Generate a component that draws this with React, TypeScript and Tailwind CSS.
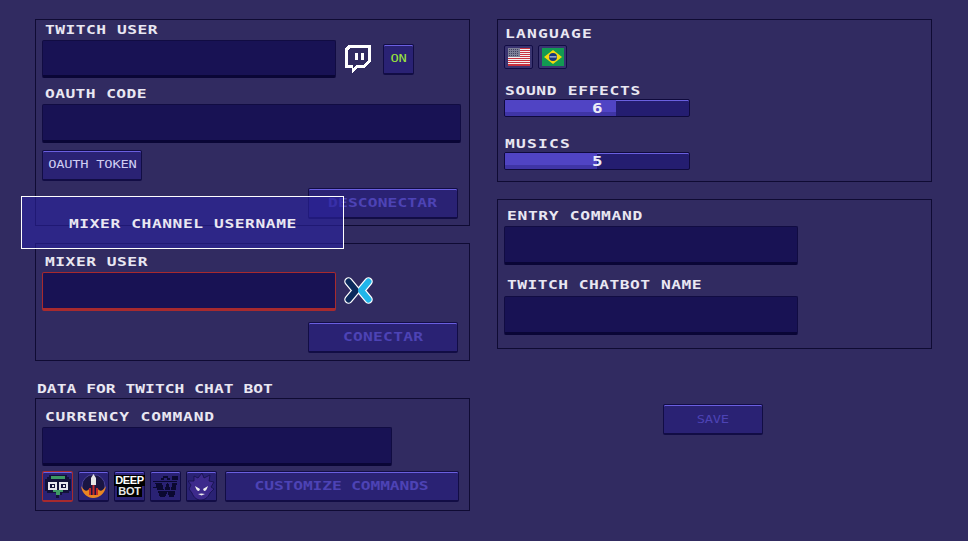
import React from "react";

const font = { fontFamily: '"DejaVu Sans Mono", monospace' };
const STRETCH = 1.25;

function Label({ children, w, className = "" }: { children: string; w: number; className?: string }) {
  const n = children.length;
  const spacing = (w / STRETCH - n * 7.83) / n;
  return (
    <div
      className={"text-[13px] leading-[14px] font-bold text-[#e9e7f2] whitespace-nowrap " + className}
      style={{ ...font, letterSpacing: spacing, width: w }}
    >
      <span className="inline-block origin-left" style={{ transform: `scaleX(${STRETCH})` }}>{children}</span>
    </div>
  );
}

function Txt({ children, spacing = 0 }: { children: string; spacing?: number }) {
  return (
    <span className="inline-block" style={{ transform: `scaleX(${STRETCH})`, letterSpacing: spacing }}>
      {children}
    </span>
  );
}

function Input({ className = "" }: { className?: string }) {
  return (
    <div className={"rounded-[2px] border border-[#110c42] border-b-[3px] border-b-[#0a0636] bg-[#181254] shrink-0 " + className} />
  );
}

function Btn({ children, className = "" }: { children?: React.ReactNode; className?: string }) {
  return (
    <div
      className={
        "flex items-center justify-center rounded-[2px] border border-[#120d45] border-b-2 bg-[#2a2274] shadow-[inset_0_1px_0_#6a5fe0] shrink-0 whitespace-nowrap " +
        className
      }
      style={font}
    >
      {children}
    </div>
  );
}

function Panel({ children, className = "" }: { children: React.ReactNode; className?: string }) {
  return <div className={"border border-[#0f0b33] w-[435px] pl-[6px] flex flex-col " + className}>{children}</div>;
}

function Slider({ value, fill }: { value: string; fill: number }) {
  return (
    <div className="relative w-[186px] h-[18px] rounded-[2px] border border-[#0f0a3c] bg-[#241d70] shadow-[inset_0_1px_0_#6a60e0] overflow-hidden" style={font}>
      <div className="flex flex-col h-full" style={{ width: fill }}>
        <div className="flex-1 bg-[#5044c4]" />
        <div className="h-[4px] bg-[#3f35a6]" />
      </div>
      <div className="absolute inset-0 flex items-center justify-center text-[14px] font-bold text-[#ecebf7]">
        <Txt>{value}</Txt>
      </div>
    </div>
  );
}

function Twitch() {
  return (
    <svg width="28" height="30" viewBox="0 0 28 30" shapeRendering="crispEdges" className="shrink-0">
      <path d="M4 1H27V18L20 24H13L8 29V24H1V5Z" fill="#fff" />
      <path d="M6 4H24V17L19 21H12L9 24V21H4V7Z" fill="#312b61" />
      <rect x="11" y="9" width="3" height="7" fill="#fff" />
      <rect x="17" y="9" width="3" height="7" fill="#fff" />
    </svg>
  );
}

function Mixer() {
  return (
    <svg width="29" height="27" viewBox="0 0 29 27" className="shrink-0">
      <path d="M4.5 4.5L12 13.5L4.5 22.5" fill="none" stroke="#fff" strokeWidth="8.5" strokeLinecap="round" strokeLinejoin="round" />
      <path d="M24.5 4.5L17 13.5L24.5 22.5" fill="none" stroke="#fff" strokeWidth="8.5" strokeLinecap="round" strokeLinejoin="round" />
      <path d="M4.5 4.5L12 13.5L4.5 22.5" fill="none" stroke="#0b2a5c" strokeWidth="6" strokeLinecap="round" strokeLinejoin="round" />
      <path d="M24.5 4.5L17 13.5L24.5 22.5" fill="none" stroke="#20b5ea" strokeWidth="6" strokeLinecap="round" strokeLinejoin="round" />
    </svg>
  );
}

function UsFlag() {
  const stripes = [0, 1, 2, 3, 4, 5, 6, 7, 8];
  return (
    <svg width="22" height="18" viewBox="0 0 22 18" shapeRendering="crispEdges">
      <rect width="22" height="18" fill="#f3f0f0" />
      {stripes.map((i) => (
        <rect key={i} y={i * 2} width="22" height="1" fill="#c8323f" />
      ))}
      <rect y="17" width="22" height="1" fill="#c8323f" />
      <rect width="12" height="9" fill="#7d7f96" />
      {[1, 3, 5, 7].map((y) =>
        [1, 3, 5, 7, 9].map((x) => <rect key={x + "-" + y} x={x} y={y} width="1" height="1" fill="#3f4260" />)
      )}
    </svg>
  );
}

function BrFlag() {
  return (
    <svg width="22" height="18" viewBox="0 0 22 18">
      <rect width="22" height="18" fill="#129a52" />
      <path d="M11 2L20 9L11 16L2 9Z" fill="#f6d80e" />
      <circle cx="11" cy="9" r="4" fill="#17357f" />
      <rect x="7.5" y="8.4" width="7" height="1" fill="#dfe6f2" />
    </svg>
  );
}

function BotA() {
  return (
    <svg width="28" height="25" viewBox="0 0 28 25" shapeRendering="crispEdges">
      <path d="M5 1H23V3H25V5H27V17H25V19H18V21H15V24H12V19H3V17H1V5H3V3H5Z" fill="#12123a" />
      <rect x="7" y="2" width="14" height="3" fill="#3e9a64" />
      <rect x="4" y="8" width="9" height="8" fill="#e6e6ee" />
      <rect x="15" y="8" width="9" height="8" fill="#e6e6ee" />
      <rect x="6" y="10" width="5" height="4" fill="#12123a" />
      <rect x="17" y="10" width="5" height="4" fill="#12123a" />
      <rect x="8" y="11" width="2" height="2" fill="#e6e6ee" />
      <rect x="19" y="11" width="2" height="2" fill="#e6e6ee" />
      <rect x="9" y="16" width="10" height="2" fill="#3e9a64" />
      <rect x="12" y="18" width="4" height="3" fill="#3e9a64" />
    </svg>
  );
}

function BotB() {
  return (
    <svg width="27" height="26" viewBox="0 0 27 26">
      <circle cx="13.5" cy="13" r="11.5" fill="#1a1542" stroke="#4a4296" />
      <path d="M1 13C2 21 8 25 13 25C19 25 25 21 26 13C23 18 20 19 18 16L18 22H9L9 16C7 19 4 18 1 13Z" fill="#e98522" />
      <path d="M11 12V5L13.5 1L16 5V12Z" fill="#e6e6e6" />
      <path d="M9 15H11V22H9ZM16 15H18V22H16ZM12.5 12H14.5V22H12.5Z" fill="#c22a2a" />
    </svg>
  );
}

function BotC() {
  return (
    <div className="flex flex-col items-center" style={{ fontFamily: '"Liberation Sans", sans-serif' }}>
      <span className="bg-black text-white text-[11px] leading-[11px] font-bold px-[1px] tracking-[-0.4px]">DEEP</span>
      <span className="bg-black text-[#e8e8e8] text-[11px] leading-[11px] font-bold px-[1px] tracking-[-0.2px]">BOT</span>
    </div>
  );
}

function BotD() {
  return (
    <svg width="26" height="22" viewBox="0 0 26 22" shapeRendering="crispEdges" fill="#0a0830">
      <path d="M2 8H9L11 16L14 8H15L18 16L19 8H24L21 22H16L14.5 17L12 22H7Z" />
      <rect x="10" y="1" width="5" height="2" />
      <rect x="8" y="3" width="3" height="2" />
      <rect x="14" y="3" width="3" height="2" />
      <rect x="19" y="1" width="6" height="4" />
      <rect x="0" y="6" width="24" height="1" />
      <rect x="2" y="15" width="24" height="1" fill="#2a2274" />
      <rect x="0" y="12" width="8" height="1" />
    </svg>
  );
}

function BotE() {
  return (
    <svg width="27" height="27" viewBox="0 0 27 27">
      <path d="M14 0L16 5L22 2L21 8L26 9L23 14L26 16L22 20C20 25 16 27 13 27C9 27 6 25 4 20L1 16L3 12L0 8L6 8L6 3L10 5Z" fill="#3d2a8c" stroke="#15104a" strokeWidth="0.8" />
      <path d="M7 13L12 16L11 18C9 18 8 16 7 13ZM20 13L15 16L16 18C18 18 19 16 20 13Z" fill="#eee" />
      <path d="M10 21L13.5 22.5L17 21L13.5 20.5Z" fill="#eee" />
    </svg>
  );
}

export default function App() {
  const disabled = "text-[13px] font-bold text-[#4d43b5]";
  return (
    <div className="relative w-[968px] h-[541px] bg-[#312b61] overflow-hidden flex gap-[27px] pl-[35px] pt-[19px]">
      <div className="flex flex-col w-[435px]">
        <Panel className="h-[207px]">
          <Label w={113} className="ml-[3px] mt-[3px] h-[17px]">TWITCH USER</Label>
          <div className="flex items-start">
            <Input className="w-[294px] h-[38px]" />
            <div className="ml-[8px] mt-[4px]"><Twitch /></div>
            <Btn className="w-[31px] h-[31px] ml-[11px] mt-[4px] text-[11px] text-[#9be23c]"><Txt spacing={-0.2}>ON</Txt></Btn>
          </div>
          <Label w={102} className="ml-[3px] mt-[9px] h-[17px]">OAUTH CODE</Label>
          <Input className="w-[419px] h-[39px]" />
          <Btn className="w-[100px] h-[31px] mt-[7px] text-[11px] text-[#cfcdf2]"><Txt spacing={-0.2}>OAUTH TOKEN</Txt></Btn>
          <div className="flex justify-end pr-[11px] mt-[7px]">
            <Btn className={"w-[150px] h-[31px] " + disabled}><Txt spacing={0.1}>DESCONECTAR</Txt></Btn>
          </div>
        </Panel>
        <Panel className="h-[118px] mt-[17px]">
          <Label w={103} className="ml-[3px] mt-[11px] h-[17px]">MIXER USER</Label>
          <div className="flex items-start">
            <div className="w-[294px] h-[39px] rounded-[2px] border border-[#a82a2e] border-b-[3px] bg-[#181254]" />
            <div className="ml-[8px] mt-[5px]"><Mixer /></div>
          </div>
          <div className="flex justify-end pr-[11px] mt-[11px]">
            <Btn className={"w-[150px] h-[31px] " + disabled}><Txt spacing={0.2}>CONECTAR</Txt></Btn>
          </div>
        </Panel>
        <Label w={236} className="ml-[2px] mt-[21px] h-[16px]">DATA FOR TWITCH CHAT BOT</Label>
        <Panel className="h-[113px]">
          <Label w={170} className="ml-[3px] mt-[11px] h-[17px]">CURRENCY COMMAND</Label>
          <Input className="w-[350px] h-[39px]" />
          <div className="flex mt-[5px] gap-[5px]">
            <Btn className="w-[31px] h-[31px] !border-[#a82a2e]"><BotA /></Btn>
            <Btn className="w-[31px] h-[31px]"><BotB /></Btn>
            <Btn className="w-[31px] h-[31px]"><BotC /></Btn>
            <Btn className="w-[31px] h-[31px]"><BotD /></Btn>
            <Btn className="w-[31px] h-[31px]"><BotE /></Btn>
            <Btn className={"w-[234px] h-[31px] ml-[3px] " + disabled}><Txt spacing={-0.1}>CUSTOMIZE COMMANDS</Txt></Btn>
          </div>
        </Panel>
      </div>

      <div className="flex flex-col w-[435px]">
        <Panel className="h-[163px]">
          <Label w={88} className="ml-[1px] mt-[7px] h-[18px]">LANGUAGE</Label>
          <div className="flex gap-[5px]">
            <div className="w-[29px] h-[24px] rounded-[2px] border border-[#120d45] bg-[#3a3470] flex items-center justify-center"><UsFlag /></div>
            <div className="w-[29px] h-[24px] rounded-[2px] border border-[#120d45] bg-[#3a3470] flex items-center justify-center"><BrFlag /></div>
          </div>
          <Label w={136} className="ml-[1px] mt-[15px] h-[15px]">SOUND EFFECTS</Label>
          <Slider value="6" fill={111} />
          <Label w={66} className="ml-[1px] mt-[20px] h-[15px]">MUSICS</Label>
          <Slider value="5" fill={92} />
        </Panel>
        <Panel className="h-[150px] mt-[17px]">
          <Label w={136} className="ml-[3px] mt-[9px] h-[17px]">ENTRY COMMAND</Label>
          <Input className="w-[294px] h-[39px]" />
          <Label w={195} className="ml-[3px] mt-[13px] h-[18px]">TWITCH CHATBOT NAME</Label>
          <Input className="w-[294px] h-[39px]" />
        </Panel>
        <Btn className="w-[100px] h-[31px] mt-[55px] ml-[166px] pt-[2px] text-[11px] text-[#4d43b5]"><Txt spacing={-0.2}>SAVE</Txt></Btn>
      </div>

      <div className="absolute left-[21px] top-[196px] w-[323px] h-[53px] border border-white bg-[#2b23a0]/60 flex items-end justify-center pb-[17px]">
        <Label w={228}>MIXER CHANNEL USERNAME</Label>
      </div>
    </div>
  );
}
